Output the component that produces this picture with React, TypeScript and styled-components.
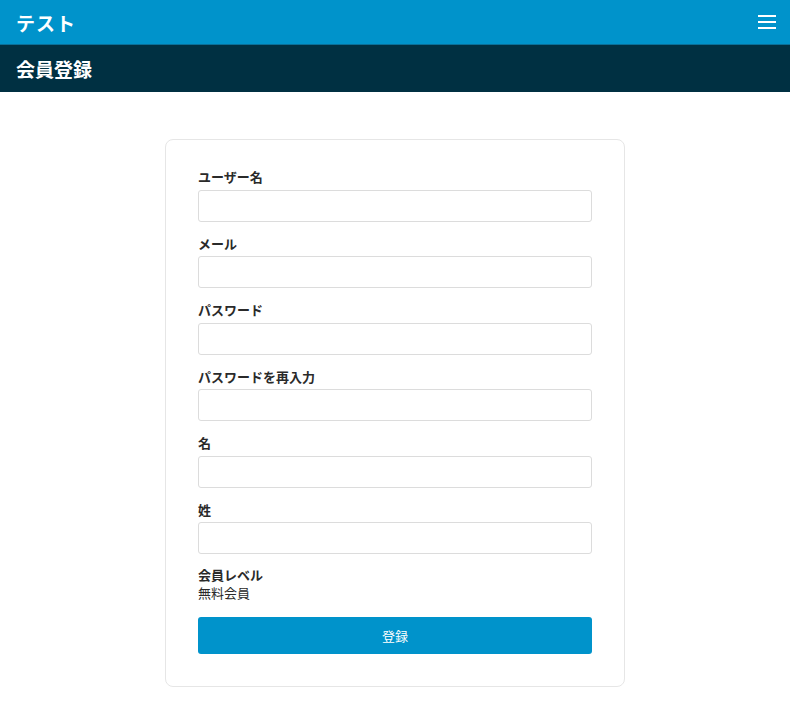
import styled, { createGlobalStyle } from 'styled-components';

const GlobalStyle = createGlobalStyle`
    body {
        margin: 0;
        background: #FFFFFF;
        font-family: "Noto Sans CJK JP", "Noto Sans", sans-serif;
        color: #2A2A2A;
    }
`;

const fields = ['ユーザー名', 'メール', 'パスワード', 'パスワードを再入力', '名', '姓'];

const TopBar = styled.header`
    height: 44px;
    background-color: #0093CB;
    border-bottom: 1px solid #0A6F98;
    display: flex;
    align-items: center;
    justify-content: space-between;
    padding: 0 14px 0 16px;
`;

const Brand = styled.div`
    color: #FFFFFF;
    font-size: 19px;
    font-weight: 700;
    letter-spacing: 1px;
`;

const MenuButton = styled.button`
    background: none;
    border: 0;
    padding: 0;
    width: 18px;
    height: 14px;
    display: flex;
    flex-direction: column;
    justify-content: space-between;
    cursor: pointer;
`;

const MenuLine = styled.span`
    display: block;
    height: 2px;
    background: #FFFFFF;
`;

const PageTitleBar = styled.div`
    height: 47px;
    background-color: #003042;
    display: flex;
    align-items: center;
    padding: 0 16px;
`;

const PageTitle = styled.h1`
    margin: 0;
    color: #FFFFFF;
    font-size: 19px;
    font-weight: 700;
`;

const Main = styled.main`
    display: flex;
    justify-content: center;
    padding-top: 47px;
`;

const Card = styled.form`
    width: 460px;
    box-sizing: border-box;
    border: 1px solid #E6E6E6;
    border-radius: 8px;
    padding: 27px 32px 32px;
`;

const Field = styled.div`
    margin-bottom: 12px;
`;

const Label = styled.label<{ tight?: boolean }>`
    display: block;
    font-size: 13px;
    font-weight: 700;
    line-height: ${props => props.tight ? '18px' : '19.5px'};
    margin-bottom: ${props => props.tight ? 0 : '3px'};
`;

const Input = styled.input`
    display: block;
    width: 100%;
    height: 32px;
    box-sizing: border-box;
    border: 1px solid #DCDCDC;
    border-radius: 3px;
    padding: 0 8px;
    font-size: 13px;
    font-family: inherit;
`;

const Value = styled.div`
    font-size: 13px;
    line-height: 18px;
`;

const SubmitButton = styled.button`
    display: block;
    width: 100%;
    height: 37px;
    margin-top: 15px;
    border: 0;
    border-radius: 3px;
    background-color: #0093CB;
    color: #FFFFFF;
    font-size: 13px;
    font-family: inherit;
    cursor: pointer;
`;

export default function App() {
    return (
        <>
            <GlobalStyle />
            <TopBar>
                <Brand>テスト</Brand>
                <MenuButton type="button" aria-label="menu">
                    <MenuLine />
                    <MenuLine />
                    <MenuLine />
                </MenuButton>
            </TopBar>
            <PageTitleBar>
                <PageTitle>会員登録</PageTitle>
            </PageTitleBar>
            <Main>
                <Card onSubmit={e => e.preventDefault()}>
                    {fields.map(name =>
                        <Field key={name}>
                            <Label>{name}</Label>
                            <Input type={name.startsWith('パスワード') ? 'password' : 'text'} />
                        </Field>
                    )}
                    <Label as="div" tight>会員レベル</Label>
                    <Value>無料会員</Value>
                    <SubmitButton type="submit">登録</SubmitButton>
                </Card>
            </Main>
        </>
    );
}
